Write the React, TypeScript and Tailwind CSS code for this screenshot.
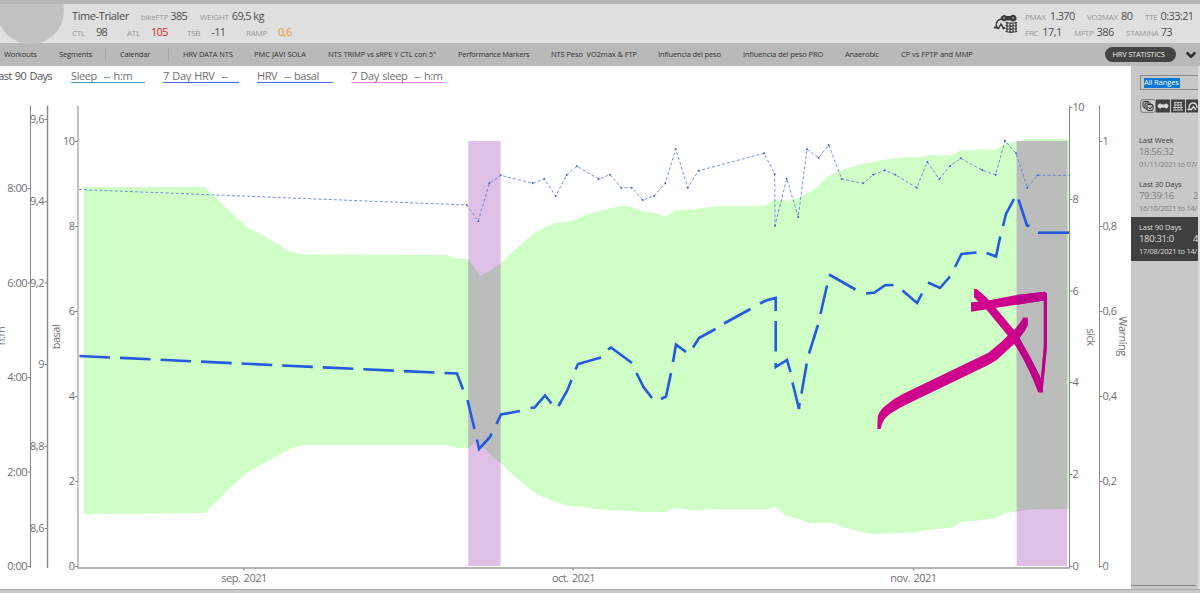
import clsx from 'clsx';
import { ChevronDown } from 'lucide-react';

const tabs = [
  { name: 'Workouts', box: 'w-[55px] tracking-[-0.15px]' },
  { name: 'Segments', box: 'w-[46px] tracking-[-0.15px]' },
  { name: 'Calendar', box: 'ml-[14px] w-[48px] tracking-[-0.15px]', divided: true },
  { name: 'HRV DATA NTS', box: 'ml-[14px] w-[71px] tracking-[-0.15px]', divided: true },
  { name: 'PMC JAVI SOLA', box: 'w-[74px] tracking-[0.02px]' },
  { name: 'NTS TRIMP vs sRPE Y CTL con 5"', box: 'w-[130px] tracking-[-0.1px]' },
  { name: 'Performance Markers', box: 'w-[93px] tracking-[-0.25px]' },
  { name: 'NTS Peso  VO2max & FTP', box: 'w-[107px] tracking-[-0.1px]' },
  { name: 'Influencia del peso', box: 'w-[85px] tracking-[-0.15px]' },
  { name: 'Influencia del peso PRO', box: 'w-[102px] tracking-[-0.1px]' },
  { name: 'Anaerobic', box: 'w-[56px] tracking-[-0.15px]' },
  { name: 'CP vs FPTP and MMP', box: 'w-[204px] tracking-[-0.05px]' },
];

const series = [
  { text: 'Sleep  -- h:m', box: 'w-[74px] border-[#3a9cc4]' },
  { text: '7 Day HRV  --', box: 'w-[76px] border-[#4169e1]' },
  { text: 'HRV  -- basal', box: 'w-[76px] border-[#4169e1]' },
  { text: '7 Day sleep  -- h:m', box: 'w-[93px] border-[#ee82ee]' },
];

const ranges = [
  { name: 'Last Week', time: '18:56:32', more: '', dates: '01/11/2021 to 07/' },
  { name: 'Last 30 Days', time: '79:39:16', more: '2', dates: '16/10/2021 to 14/' },
  { name: 'Last 90 Days', time: '180:31:0', more: '4', dates: '17/08/2021 to 14/', active: true },
];

const areaPath =
  'M83.5 187H205L213 195L236 217.5L248 228L264 236L290 251.5L303 254.5L447 255L457 258.5L468 259L480 276L490 271L500 264L511 253L534 233L555 223L570 221.5L588 214L620 206L632 207L642 211L655 213L666 216.5L676 210L698 209L710 206.5L764 206L775 199.5L787 201L798 198L812 191L830 175L841 170L862 164L890 159L906 157L920 157.5L930 155L950 155.5L962 150L995 149.5L1007 143L1022 141L1024 139H1069V509L1030 509.5L1005 513L995 518.5L960 522.5L952 527.5L928 530L917 532.3L873 534.2L860 531.5L844 527.5L832 523H808L797 518.5L786 516L776 507L765 509.5H710L698 510.5L676 508L666 512H643L628 511L600 509.5L586 507.5L567 505.5L550 500L538 495L522 483L501 464L487 451L476 441L470 448L455 447.7L447 445H305L292 448L248 472L233 485L208 510L204 513L83.5 514.3Z';

const dailyHrv: [number, number][] = [
  [79, 189.5], [466.7, 205], [478.3, 221.3], [489.3, 183.3], [500.7, 175.3], [532.7, 183.3], [544.3, 179],
  [555.7, 196], [566.7, 175], [577, 166.3], [598.7, 179], [610, 174.7], [621.3, 187.7], [631.7, 187.7],
  [642.7, 200], [654, 196], [665.3, 183.3], [675.7, 149], [687.7, 187.7], [698.7, 170.7], [764, 153.3],
  [774.7, 174], [775, 225.7], [786.7, 178.7], [798.3, 217], [807, 149.3], [818.7, 157.7], [828.7, 145],
  [841.7, 179], [863.3, 183.3], [873.3, 174.7], [884.7, 170.3], [895.3, 174.7], [916.7, 187.7], [927.3, 162],
  [939.3, 179], [950, 166], [960.7, 158.3], [982.3, 170.3], [995.7, 174.7], [1005, 140.7], [1016, 153.3],
  [1027.3, 187.7], [1037.7, 175.3], [1069, 175.3],
];

// Rolling average after the flat stretch, one stroke per dash
const weeklyHrv = [
  '444.5,373 457,373.5 463,389.5',
  '467.5,400 474.5,429',
  '477,439.5 479,449 490,437 491.5,433.5',
  '496.5,424 501,414.5 520,411',
  '530.5,408 534.5,407.5 545,395.5 551.5,403.5',
  '558.5,406 567,391 571.5,380',
  '575.5,369.5 578,364 601,357.5',
  '608,349.5 611,347.5 632,363',
  '636.5,373 643.5,387 652,398',
  '661,399 666,396.5 671,373',
  '673,362 676,344.5 686,352',
  '693,347.5 699,338 715.5,329',
  '724,323.5 750.5,309',
  '760,303.5 766,300.5 775.7,298 775.7,311',
  '775.7,321 775.7,351.5',
  '775.7,363 775.7,367 787,360 790.5,372',
  '792.5,382.5 799,409 799.5,403',
  '801.5,393.5 806.7,363.5',
  '809,353.5 818,325',
  '820.5,314 827,285.5',
  '829,274.5 855.5,289.5',
  '866,293.5 874.5,292.5 885,285.3 893.5,285',
  '902.5,290.5 917,303 922,293.5',
  '928,282.5 940,288 950,276.5',
  '955,267 961.5,254 976.5,252.5',
  '986.5,253 996,256.5 1000.3,236.5',
  '1003,226 1006,214 1014,199',
  '1018.5,199.5 1027,225.5 1029.5,226',
  '1038,232.7 1069,232.7',
];

const axes = [
  { x: 30.5, side: 'left', labels: [['8:00', 188.5], ['6:00', 283], ['4:00', 377.5], ['2:00', 472], ['0:00', 566.5]] },
  { x: 47.5, side: 'left', labels: [['9,6', 119.5], ['9,4', 201.5], ['9,2', 283], ['9', 364.5], ['8,8', 446.5], ['8,6', 528.5]] },
  { x: 78, side: 'left', labels: [['10', 141.5], ['8', 226.5], ['6', 311.5], ['4', 396.5], ['2', 481.5], ['0', 566.5]] },
  { x: 1069.5, side: 'right', labels: [['10', 107.5], ['8', 199.5], ['6', 291], ['4', 382.5], ['2', 474.5], ['0', 566.5]] },
  { x: 1099.5, side: 'right', labels: [['1', 141.5], ['0,8', 226.5], ['0,6', 311.5], ['0,4', 396.5], ['0,2', 481.5], ['0', 566.5]] },
] as { x: number; side: 'left' | 'right'; labels: [string, number][] }[];

const arrowPaths = [
  'M877.3 429L877.7 417Q879 411 885 406Q893 399 903.3 393.8L988.3 352.8Q1000 344 1011.7 331.7Q1019 326 1023.3 317.7H1027.7V325Q1026 330 1021.7 335L1013 345L996.7 360L988.3 365L910 402.8Q893 411 886.7 416.7Q882 421 880.7 429Z',
  'M971 302.3L986.7 300.7L1016.7 295L1045 291.7L1046.9 294V300L1020 304.3L971 311.7Z',
  'M1043.8 293H1046.9V346.7L1042.5 392.3H1039.8L1043.8 346.7Z',
  'M974 289H976.7Q986 296 993.3 305L1016.7 333.3L1030 356.7L1040.5 377.5L1042.5 392.3H1038.3Q1030 370 1018.3 350L1010 338.3L986.7 310L974 297.3Z',
];

function Metric({ label, value, box, gap = 'gap-[4px]', color = 'text-[#505050]' }: { label: string; value: string; box: string; gap?: string; color?: string }) {
  return (
    <div className={clsx('flex shrink-0 items-baseline whitespace-nowrap', box, gap)}>
      <span className="text-[8px] tracking-[-0.25px] text-[#999]">{label}</span>
      <span className={clsx('text-[11px] tracking-[-0.6px]', color)}>{value}</span>
    </div>
  );
}

function RiderIcon() {
  return (
    <svg className="h-[20px] w-[24px]" viewBox="0 0 24 20" fill="none" stroke="#3c3c3c">
      <path d="M2.5 13C1.5 7 5 5 8 5M2 13L4.5 14.5L7 10L10 15" strokeWidth="1.5" />
      <path d="M0 13.5H3.5M8.5 14H11" strokeWidth="2" />
      <path d="M7.5 4A2.6 2.6 0 0 1 12 2.8H17A2.6 2.6 0 1 1 17 5.6H12A2.6 2.6 0 0 1 7.5 4Z" fill="#3c3c3c" strokeWidth="1.6" />
      <path d="M9 4H11M18 4H20" stroke="#ccc" strokeWidth="1" />
      <path d="M11.5 8.5Q17 10 23 8.5M11.5 11.5Q17 13 23 11.5M11.5 14.5Q17 16 23 14.5M11.5 17.5Q17 19 23 17.5M13 8V18M16 9V19M19 9V19M22 8V18" strokeWidth="1.25" />
    </svg>
  );
}

function Header() {
  return (
    <header className="flex h-[39px] shrink-0 bg-[#dfdfdf]">
      <div className="relative z-10 h-[40px] w-[72px] shrink-0 overflow-hidden">
        <div className="absolute -top-[26px] -left-[3px] h-[66px] w-[67px] rounded-full bg-[#c2c2c2]" />
      </div>
      <div className="flex w-[922px] flex-col pt-[4px]">
        <div className="flex h-[16px] items-baseline">
          <span className="w-[69px] text-[11px] leading-4 tracking-[-0.4px] whitespace-nowrap text-[#484848]">Time-Trialer</span>
          <Metric label="bikeFTP" value="385" box="w-[59px]" gap="gap-[2px]" />
          <Metric label="WEIGHT" value="69,5 kg" box="w-[70px]" gap="gap-[3px]" />
        </div>
        <div className="flex h-[16px] items-baseline">
          <Metric label="CTL" value="98" box="w-[55px]" gap="gap-[11px]" />
          <Metric label="ATL" value="105" box="w-[60px]" gap="gap-[11px]" color="text-[#e0282c]" />
          <Metric label="TSB" value="-11" box="w-[59px]" gap="gap-[11px]" />
          <Metric label="RAMP" value="0,6" box="w-[40px]" gap="gap-[11px]" color="text-[#f0982c]" />
        </div>
      </div>
      <div className="flex w-[31px] shrink-0 pt-[10px]">
        <RiderIcon />
      </div>
      <div className="flex flex-col pt-[4px]">
        <div className="flex h-[16px] items-baseline">
          <Metric label="PMAX" value="1.370" box="w-[62px]" />
          <Metric label="VO2MAX" value="80" box="w-[58px]" gap="gap-[3px]" />
          <Metric label="TTE" value="0:33:21" box="w-[52px]" gap="gap-[3px]" />
        </div>
        <div className="flex h-[16px] items-baseline">
          <Metric label="FRC" value="17,1" box="w-[49px]" />
          <Metric label="MFTP" value="386" box="w-[52px]" gap="gap-[3px]" />
          <Metric label="STAMINA" value="73" box="w-[50px]" gap="gap-[2px]" />
        </div>
      </div>
    </header>
  );
}

function TabBar() {
  return (
    <nav className="flex h-[23px] shrink-0 items-center bg-[#b9b9b9] pl-[4px] text-[7.5px] text-[#333]">
      {tabs.map((tab) => (
        <div key={tab.name} className="flex shrink-0 items-center">
          {tab.divided && <span className="h-[13px] w-px bg-[#a5a5a5]" />}
          <span className={clsx('whitespace-pre', tab.box)}>{tab.name}</span>
        </div>
      ))}
      <button className="flex h-[15px] w-[71px] shrink-0 items-center justify-center rounded-full bg-[#444] pr-[4px] text-[7.5px] tracking-[-0.2px] whitespace-nowrap text-[#e8e8e8]">
        HRV STATISTICS
      </button>
      <ChevronDown className="ml-[8px] size-[14px] shrink-0 text-[#333]" strokeWidth={4.5} />
    </nav>
  );
}

function Axis({ x, side, labels }: (typeof axes)[number]) {
  const left = side === 'left';
  return (
    <g>
      <path d={`M${x} 105.5V568`} stroke="#898989" strokeWidth={x === 47.5 ? 1.5 : 1} />
      {labels.map(([text, y]) => (
        <g key={text}>
          <path d={`M${x} ${y}h${left ? -3 : 3}`} stroke="#898989" />
          <text x={left ? x - 3.5 : x + 3} y={y + 3.5} textAnchor={left ? 'end' : 'start'}>{text}</text>
        </g>
      ))}
    </g>
  );
}

function Chart() {
  return (
    <svg className="block h-[499px] w-[1131px]" viewBox="0 90 1131 499">
      <defs>
        <clipPath id="normalRange">
          <path d={areaPath} />
        </clipPath>
        <clipPath id="sickBand">
          <rect x="1016.7" y="141" width="50.6" height="425" />
        </clipPath>
      </defs>
      <path d={areaPath} fill="#cffec6" />
      <g fill="#debfe6">
        <rect x="468.3" y="141" width="32.3" height="425" />
        <rect x="1016.7" y="141" width="50.6" height="425" />
      </g>
      <g fill="#bbbdbc" clipPath="url(#normalRange)">
        <rect x="468.3" y="141" width="32.3" height="425" />
        <rect x="1016.7" y="141" width="50.6" height="425" />
      </g>

      <polyline points={dailyHrv.join(' ')} fill="none" stroke="#5f83dc" strokeWidth="0.9" strokeDasharray="3 2.1" />
      {dailyHrv.slice(1, -1).map(([x, y]) => (
        <circle key={`${x}-${y}`} cx={x} cy={y} r="1" fill="#3f66d6" />
      ))}
      <g fill="none" stroke="#2459e0" strokeWidth="2.6">
        <path d="M79.4 356L444 373" strokeDasharray="30.6 10" />
        {weeklyHrv.map((points) => (
          <polyline key={points} points={points} />
        ))}
      </g>

      <g className="fill-[#707070] text-[11px] tracking-[-0.5px]">
        {axes.map((axis) => (
          <Axis key={axis.x} {...axis} />
        ))}
        <path d="M77.5 568H1070M244 568v2.5M573 568v2.5M913.5 568v2.5" stroke="#9a9d98" strokeWidth="1.5" />
        <g className="[word-spacing:1px]" textAnchor="middle">
          <text x="244" y="582">sep. 2021</text>
          <text x="573.5" y="582">oct. 2021</text>
          <text x="913.5" y="582">nov. 2021</text>
        </g>
        <text transform="translate(4.5 336) rotate(-90)" textAnchor="middle">h:m</text>
        <text transform="translate(59.5 337) rotate(-90)" textAnchor="middle">basal</text>
        <text transform="translate(1087 337) rotate(90)" textAnchor="middle">sick</text>
        <text transform="translate(1119 336) rotate(90)" textAnchor="middle">Warning</text>
      </g>

      {/* Trend arrow, darker where it crosses the band */}
      <g fill="#d0048c">
        {arrowPaths.map((d) => (
          <path key={d} d={d} />
        ))}
      </g>
      <g fill="#bd0389" clipPath="url(#sickBand)">
        {arrowPaths.map((d) => (
          <path key={d} d={d} />
        ))}
      </g>
    </svg>
  );
}

function FilterIcons() {
  return (
    <svg className="h-[14px] w-[58px]" viewBox="0 0 58 14" fill="none">
      <rect x="0.7" y="0.7" width="15" height="12.6" rx="2" fill="#cdcdcd" stroke="#777" />
      <g fill="#bbb" stroke="#333">
        <rect x="3" y="2.5" width="6" height="6" rx="1" />
        <rect x="5" y="4" width="6" height="6" rx="1" />
        <rect x="7" y="5.5" width="6" height="6" rx="1" />
        <path d="M8.5 8.5L10 10L13 6.5" />
      </g>
      <path d="M16 0.5H30V13.5H16ZM31 0.5H45V13.5H31ZM46 0.5H58V13.5H46Z" fill="#424242" />
      <path d="M18 7a2 2 0 0 1 3.6-1.3h3a2 2 0 1 1 0 2.6h-3A2 2 0 0 1 18 7Z" fill="#ddd" stroke="#ddd" strokeWidth="0.6" />
      <path d="M34 3.5h8M34 6h8M33 8.5h10M33 11h10M35 3V11.5M38 3V11.5M41 3V11.5" stroke="#ccc" strokeWidth="0.9" />
      <path d="M49 10C49 6 51 4 53 4C56 4 57 6 57 9M47.5 10.5H51M51 11L53.5 7.5L56 11" stroke="#ddd" strokeWidth="1.3" />
    </svg>
  );
}

function Sidebar() {
  return (
    <aside className="flex w-[69px] shrink-0 flex-col overflow-hidden border-r-2 border-[#dcdcdc] bg-[#c8c8c8] pt-[9px]">
      <div className="ml-[9px] flex h-[15px] w-[58px] shrink-0 items-center border border-r-0 border-[#888] pl-[3px]">
        <span className="h-[10px] w-[36px] bg-[#0878d4] text-[7.5px] leading-[9px] tracking-[-0.1px] whitespace-nowrap text-white">All Ranges</span>
      </div>
      <div className="mt-[9px] ml-[9px] h-[14px] w-[58px] shrink-0">
        <FilterIcons />
      </div>
      <div className="mt-[17px] flex flex-col text-[#808080]">
        {ranges.map((range) => (
          <div
            key={range.name}
            className={clsx('flex h-[43.5px] flex-col pt-[5px] pl-[8px] whitespace-nowrap', range.active && 'bg-[#404040] text-[#ddd]')}
          >
            <div className={clsx('h-[10px] text-[7.5px] leading-[10px] tracking-[-0.1px]', !range.active && 'text-[#404040]')}>{range.name}</div>
            <div className="flex h-[13px] text-[9.5px] leading-[14px] tracking-[-0.35px]">
              <span className="w-[55px]">{range.time}</span>
              <span>{range.more}</span>
            </div>
            <div className="h-[11px] text-[7.5px] leading-[12px] tracking-[-0.25px]">{range.dates}</div>
          </div>
        ))}
      </div>
      <div className="mt-auto mr-[2px] mb-[3px] h-px bg-[#888]" />
    </aside>
  );
}

export default function App() {
  return (
    <div className="flex h-[593px] w-[1200px] flex-col overflow-hidden bg-white font-['Open_Sans','Noto_Sans',sans-serif]">
      <div className="h-[4px] shrink-0 bg-[#b4b7b5]" />
      <Header />
      <TabBar />
      <div className="flex h-[523px] shrink-0">
        <main className="w-[1131px] shrink-0 overflow-hidden">
          <div className="flex h-[24px] pt-[3px] text-[11px] leading-[14px] tracking-[-0.4px] [word-spacing:1px] whitespace-pre text-[#707070]">
            <span className="-ml-[7px] w-[78px] tracking-[-0.6px] text-[#555]">Last 90 Days</span>
            <div className="flex gap-[18px]">
              {series.map((item) => (
                <span key={item.text} className={clsx('h-[14px] border-b', item.box)}>{item.text}</span>
              ))}
            </div>
          </div>
          <Chart />
        </main>
        <Sidebar />
      </div>
      <footer className="h-[4px] shrink-0 border-t border-[#a9a9a9] bg-[#c9c9c9]" />
    </div>
  );
}
